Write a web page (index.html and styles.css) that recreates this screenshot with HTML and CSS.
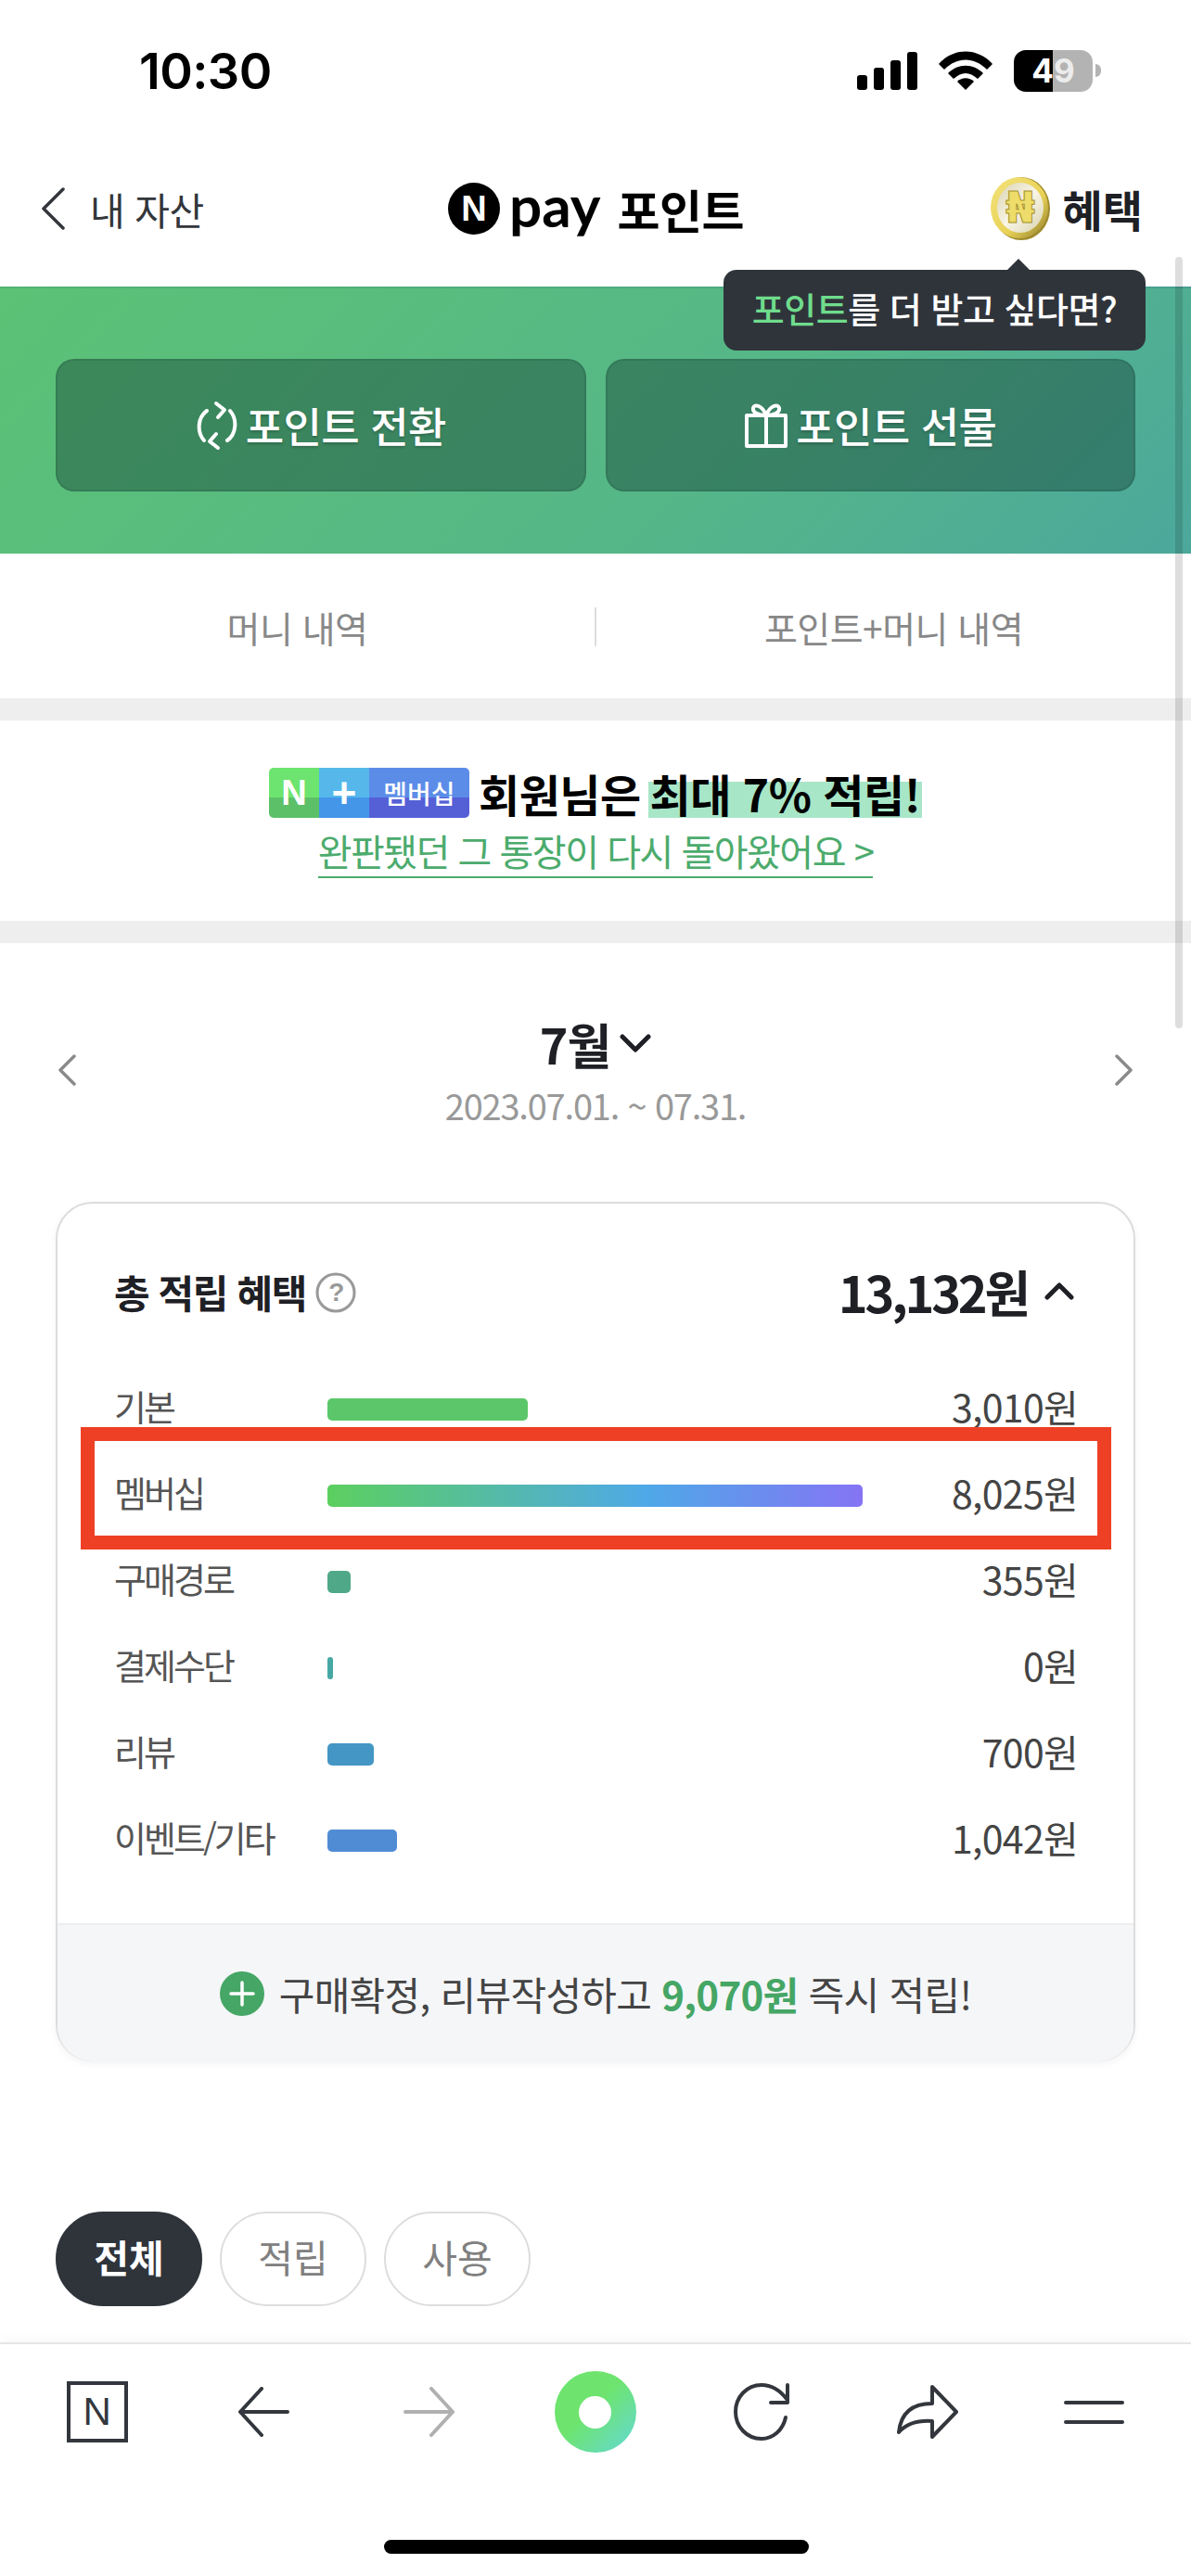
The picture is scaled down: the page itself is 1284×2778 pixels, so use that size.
FILE: index.html
```html
<!DOCTYPE html>
<html lang="ko">
<head>
  <meta charset="UTF-8"/>
  <meta name="viewport" content="width=device-width, initial-scale=1.0"/>
  <title>N pay 포인트</title>
  <link rel="stylesheet" href="styles.css">
</head>
<body>
<div class="page">

  <!-- Status Bar -->
  <div class="status-bar">
    <div class="clock">10:30</div>
    <div class="status-icons">
      <svg class="signal" width="65" height="41" viewBox="0 0 65 41"><rect x="0" y="25" width="11" height="16" rx="3"/><rect x="18" y="17" width="11" height="24" rx="3"/><rect x="36" y="9" width="11" height="32" rx="3"/><rect x="54" y="0" width="11" height="41" rx="3"/></svg>
      <svg class="wifi" width="58" height="42" viewBox="0 0 58 42"><path d="M0 14 C16 -4 42 -4 58 14 L52 20 C38 6 20 6 6 20 Z"/><path d="M10 24 C21 13 37 13 48 24 L42 30 C33 22 25 22 16 30 Z"/><path d="M20 33 C25 28 33 28 38 33 L29 42 Z"/></svg>
      <div class="battery"><div class="battery-body">4<span class="battery-nine">9</span></div><div class="battery-cap"></div></div>
    </div>
  </div>

  <!-- Top Nav -->
  <div class="top-nav">
    <div class="nav-back">
      <svg width="26" height="46" viewBox="0 0 26 46"><path class="line-dark" d="M24 2 L3 23 L24 44"/></svg>
      <span>내 자산</span>
    </div>
    <div class="nav-title">
      <span class="n-logo">N</span>
      <span class="pay-word">pay</span>
      <span class="title-word">포인트</span>
    </div>
    <div class="nav-benefit">
      <svg class="coin" width="64" height="68" viewBox="0 0 64 68">
        <defs>
          <linearGradient id="coinRim" x1="0" y1="0" x2="1" y2="1"><stop offset="0" stop-color="#f3e27c"/><stop offset="0.6" stop-color="#e9d257"/><stop offset="1" stop-color="#8f7d2a"/></linearGradient>
          <linearGradient id="coinFace" x1="0" y1="0" x2="1" y2="1"><stop offset="0" stop-color="#d8d2b0"/><stop offset="0.5" stop-color="#f8f5e6"/><stop offset="1" stop-color="#d9d3ae"/></linearGradient>
        </defs>
        <ellipse cx="33" cy="34" rx="31" ry="34" fill="#a08b2e"/>
        <ellipse cx="31" cy="33" rx="31" ry="33" fill="url(#coinRim)"/>
        <ellipse cx="32" cy="33" rx="25" ry="27" fill="url(#coinFace)"/>
        <text class="coin-mark" x="32" y="49">₦</text>
      </svg>
      <span>혜택</span>
    </div>
  </div>

  <div class="content">

    <!-- Point Buttons -->
    <div class="hero">
      <div class="hero-btn">
        <svg width="46" height="54" viewBox="0 0 46 54"><path class="line-white" d="M12 11 C2 18 1 34 9 43 M34 43 C44 36 45 20 37 11"/><path class="line-white" d="M22 3 L31 10 L24 18 M24 51 L15 44 L22 36"/></svg>
        <span>포인트 전환</span>
      </div>
      <div class="hero-btn">
        <svg width="48" height="48" viewBox="0 0 48 48"><path class="line-white" d="M3 13 H45 V46 H3 Z M24 13 V46"/><path class="line-white" d="M24 13 C16 13 9 10 10 5 C11 0 20 2 24 13 C28 2 37 0 38 5 C39 10 32 13 24 13"/></svg>
        <span>포인트 선물</span>
      </div>
    </div>

    <!-- History Tabs -->
    <div class="history-tabs">
      <div class="history-tab">머니 내역</div>
      <div class="history-divider"></div>
      <div class="history-tab">포인트+머니 내역</div>
    </div>

    <!-- Membership Banner -->
    <div class="banner">
      <div class="banner-main">
        <div class="badge">
          <div class="badge-part badge-n">N</div>
          <div class="badge-part badge-plus">+</div>
          <div class="badge-part badge-member">멤버십</div>
        </div>
        <span class="banner-text">회원님은</span>
        <span class="banner-mark">최대 7% 적립!</span>
      </div>
      <div class="banner-link">완판됐던 그 통장이 다시 돌아왔어요 &gt;</div>
    </div>

    <!-- Month Picker -->
    <div class="month-picker">
      <svg width="20" height="34" viewBox="0 0 20 34"><path class="line-gray" d="M18 2 L3 17 L18 32"/></svg>
      <div class="month-center">
        <div class="month-name">7월
          <svg width="34" height="22" viewBox="0 0 34 22"><path class="line-month" d="M3 4 L17 18 L31 4"/></svg>
        </div>
        <div class="month-range">2023.07.01. ~ 07.31.</div>
      </div>
      <svg width="20" height="34" viewBox="0 0 20 34"><path class="line-gray" d="M2 2 L17 17 L2 32"/></svg>
    </div>

    <!-- Summary Card -->
    <div class="card">
      <div class="card-head">
        <div class="card-title">총 적립 혜택
          <svg class="help" width="44" height="44" viewBox="0 0 44 44"><circle class="help-ring" cx="22" cy="22" r="20"/><text class="help-mark" x="22" y="31">?</text></svg>
        </div>
        <div class="card-total">13,132원
          <svg width="32" height="20" viewBox="0 0 32 20"><path class="line-month" d="M3 17 L16 4 L29 17"/></svg>
        </div>
      </div>

      <div class="rows">
        <div class="row"><div class="row-label">기본</div><div class="row-track"><div class="bar bar-base" style="width:216px"></div></div><div class="row-value">3,010원</div></div>
        <div class="row"><div class="row-label">멤버십</div><div class="row-track"><div class="bar bar-member" style="width:577px"></div></div><div class="row-value">8,025원</div></div>
        <div class="row"><div class="row-label">구매경로</div><div class="row-track"><div class="bar bar-route" style="width:25px"></div></div><div class="row-value">355원</div></div>
        <div class="row"><div class="row-label">결제수단</div><div class="row-track"><div class="bar bar-pay" style="width:6px"></div></div><div class="row-value">0원</div></div>
        <div class="row"><div class="row-label">리뷰</div><div class="row-track"><div class="bar bar-review" style="width:50px"></div></div><div class="row-value">700원</div></div>
        <div class="row"><div class="row-label">이벤트/기타</div><div class="row-track"><div class="bar bar-event" style="width:75px"></div></div><div class="row-value">1,042원</div></div>
      </div>

      <div class="card-foot">
        <svg width="48" height="48" viewBox="0 0 48 48"><circle class="plus-dot" cx="24" cy="24" r="24"/><path class="line-plus" d="M24 12 V36 M12 24 H36"/></svg>
        <span>구매확정, 리뷰작성하고 <b>9,070원</b> 즉시 적립!</span>
      </div>

      <div class="highlight-box"></div>
    </div>

    <!-- Type Filter -->
    <div class="filters">
      <div class="filter active">전체</div>
      <div class="filter">적립</div>
      <div class="filter">사용</div>
    </div>

    <!-- Tooltip + Scrollbar -->
    <div class="tooltip"><span class="tooltip-accent">포인트</span>를 더 받고 싶다면?</div>
    <div class="scrollbar"></div>
  </div>

  <!-- Browser Toolbar -->
  <div class="toolbar">
    <div class="tool-row">
      <div class="tool-n">N</div>
      <svg width="56" height="54" viewBox="0 0 56 54"><path class="line-tool" d="M26 2 L3 27 L26 52 M3 27 H54"/></svg>
      <svg width="56" height="54" viewBox="0 0 56 54"><path class="line-tool-off" d="M30 2 L53 27 L30 52 M2 27 H53"/></svg>
      <div class="tool-green"><div class="tool-green-hole"></div></div>
      <svg width="62" height="64" viewBox="0 0 62 64"><path class="line-tool" d="M57 38 C54 52 43 61 31 61 C15 61 3 48 3 32 C3 16 15 3 31 3 C43 3 51 9 58 18 M59 3 V22 H41"/></svg>
      <svg width="66" height="60" viewBox="0 0 66 60"><path class="line-tool" d="M2 52 C4 32 16 21 38 21 V3 L64 30 L38 57 V40 C22 39 10 43 2 52 Z"/></svg>
      <div class="tool-menu"><div></div><div></div></div>
    </div>
    <div class="home-indicator"></div>
  </div>

</div>
</body>
</html>
```

FILE: styles.css
```css
* { box-sizing: border-box; }
body { margin: 0; background: #fff; font-family: "Noto Sans CJK KR", sans-serif; color: #1e2025; }

.page { width: 1284px; height: 2778px; display: flex; flex-direction: column; overflow: hidden; }

.status-bar { height: 140px; flex: none; padding: 12px 97px 0 150px; display: flex; justify-content: space-between; align-items: center; }
.clock { font-family: Inter, sans-serif; font-size: 54px; font-weight: 600; letter-spacing: -0.6px; color: #000; }
.status-icons { display: flex; align-items: center; gap: 23px; }
.signal, .wifi { fill: #000; display: block; }
.battery { display: flex; align-items: center; gap: 3px; }
.battery-body {
  width: 85px;
  height: 45px;
  border-radius: 13px;
  background: linear-gradient(90deg, #000 49%, #b3b3b3 49%);
  color: #fff;
  font-family: Inter, sans-serif;
  font-size: 35px;
  font-weight: 700;
  line-height: 45px;
  text-align: center;
}
.battery-nine { color: #ececec; }
.battery-cap { width: 6px; height: 14px; background: #b3b3b3; border-radius: 0 6px 6px 0; }

.top-nav { height: 169px; flex: none; padding: 0 52px 0 44px; display: flex; justify-content: space-between; align-items: center; position: relative; }
.nav-back { display: flex; align-items: center; gap: 27px; font-size: 41px; letter-spacing: -0.5px; color: #33363b; }
.nav-title { position: absolute; left: 483px; top: 50%; transform: translateY(-50%); display: flex; align-items: center; }
.n-logo {
  width: 56px;
  height: 56px;
  border-radius: 50%;
  background: #000;
  color: #fff;
  font-family: "Liberation Sans", sans-serif;
  font-size: 38px;
  font-weight: 700;
  line-height: 56px;
  text-align: center;
}
.pay-word { margin-left: 10px; font-family: Lato, sans-serif; font-size: 62px; font-weight: 700; line-height: 60px; padding-bottom: 8px; color: #000; }
.title-word { margin-left: 18px; font-size: 50px; font-weight: 700; letter-spacing: -0.5px; color: #000; }
.nav-benefit { display: flex; align-items: center; gap: 14px; font-size: 47px; font-weight: 700; }
.coin-mark { font-family: "DejaVu Sans", sans-serif; font-size: 46px; font-weight: 700; text-anchor: middle; fill: #eedd6a; stroke: #a8922c; stroke-width: 1; }

.content { flex: 1; position: relative; }

.hero {
  height: 288px;
  padding: 76px 60px 0;
  display: flex;
  gap: 21px;
  background: linear-gradient(135deg, #5cc275, #55b688 60%, #4ca89c);
  border-top: 2px solid rgba(0,0,0,0.06);
}
.hero-btn {
  flex: 1;
  height: 143px;
  border-radius: 20px;
  border: 2px solid rgba(20,60,50,0.16);
  background: rgba(20,60,50,0.42);
  color: #fff;
  font-size: 45px;
  font-weight: 500;
  letter-spacing: -0.6px;
  text-shadow: 0 2px 3px rgba(0,0,0,0.2);
  display: flex;
  justify-content: center;
  align-items: center;
  gap: 8px;
}

.line-white { fill: none; stroke: #fff; stroke-width: 4; stroke-linecap: round; stroke-linejoin: round; }
.line-dark { fill: none; stroke: #33363b; stroke-width: 3.5; stroke-linecap: round; stroke-linejoin: round; }
.line-gray { fill: none; stroke: #8a8a8a; stroke-width: 3.5; stroke-linecap: round; stroke-linejoin: round; }
.line-month { fill: none; stroke: #1e2025; stroke-width: 5; stroke-linecap: round; stroke-linejoin: round; }
.line-tool { fill: none; stroke: #33373d; stroke-width: 4; stroke-linecap: round; stroke-linejoin: round; }
.line-tool-off { fill: none; stroke: #b0b0b0; stroke-width: 4; stroke-linecap: round; stroke-linejoin: round; }
.line-plus { fill: none; stroke: #fff; stroke-width: 3.5; stroke-linecap: round; }

.history-tabs { height: 156px; padding-top: 2px; display: flex; align-items: center; }
.history-tab { flex: 1; text-align: center; font-size: 39px; color: #888; letter-spacing: -0.5px; }
.history-divider { width: 2px; height: 42px; background: #ddd; }

.banner { height: 264px; border-top: 24px solid #eee; border-bottom: 24px solid #eee; display: flex; flex-direction: column; align-items: center; padding-top: 51px; }
.banner-main { display: flex; align-items: flex-end; height: 54px; font-size: 48px; font-weight: 700; color: #000; letter-spacing: -0.5px; }
.badge { display: flex; height: 54px; border-radius: 5px; overflow: hidden; margin-right: 10px; }
.badge-part { color: #fff; display: flex; justify-content: center; align-items: center; font-weight: 700; letter-spacing: 0; line-height: 54px; }
.badge-n { width: 54px; font-family: "Liberation Sans", sans-serif; font-size: 38px; background: linear-gradient(#6de46f 60%, #5cc068 60%); }
.badge-plus { width: 54px; font-family: "Liberation Sans", sans-serif; font-size: 46px; background: linear-gradient(#56b8ea 60%, #4496e8 60%); }
.badge-member { width: 108px; font-size: 28px; font-weight: 500; background: linear-gradient(#5b8ce8 60%, #5560d6 60%); }
.banner-text, .banner-mark { line-height: 54px; }
.banner-mark { margin-left: 8px; padding: 0 2px; background: linear-gradient(transparent 28%, #a8e6c8 28%); }
.banner-link {
  margin-top: 10px;
  font-size: 40px;
  line-height: 50px;
  letter-spacing: -1.5px;
  color: #4cab6d;
  border-bottom: 2px solid #4cab6d;
  padding-bottom: 3px;
}

.month-picker { height: 279px; padding: 73px 62px 79px; display: flex; justify-content: space-between; align-items: center; }
.month-center { text-align: center; }
.month-name { height: 70px; display: flex; justify-content: center; align-items: center; gap: 10px; font-size: 52px; font-weight: 700; letter-spacing: -1px; }
.month-range { margin-top: 7px; font-size: 38px; line-height: 50px; letter-spacing: -1.2px; color: #999; }

.card { margin: 0 60px; height: 927px; position: relative; border: 2px solid #ddd; border-radius: 40px; box-shadow: 0 3px 8px rgba(0,0,0,0.05); background: #fff; }
.card-head { height: 174px; padding: 14px 64px 0 61px; display: flex; justify-content: space-between; align-items: center; }
.card-title { display: flex; align-items: center; gap: 10px; font-size: 42px; font-weight: 700; letter-spacing: -1.4px; }
.help { margin-top: 4px; }
.help-ring { fill: none; stroke: #999; stroke-width: 3; }
.help-mark { font-family: "Liberation Sans", sans-serif; font-size: 28px; fill: #999; text-anchor: middle; }
.card-total { display: flex; align-items: center; gap: 18px; font-size: 54px; font-weight: 700; letter-spacing: -3.2px; }

.rows { padding-bottom: 44px; }
.row { height: 93px; padding: 0 60px 0 61px; display: flex; align-items: center; font-size: 38px; color: #555; letter-spacing: -3px; }
.row-label { width: 230px; flex: none; padding-bottom: 6px; }
.row-track { flex: 1; padding-top: 2px; }
.row-value { font-size: 41px; color: #444; letter-spacing: -0.7px; padding-bottom: 6px; }
.bar { height: 24px; border-radius: 5px; }
.bar-base { background: #5cc76a; }
.bar-member { background: linear-gradient(90deg, #5ccf5f, #4fa8e8 60%, #8574f4); }
.bar-route { background: #4fa988; }
.bar-pay { background: #46a8a4; }
.bar-review { background: #4497c4; }
.bar-event { background: #508cd4; }

.card-foot {
  height: 149px;
  border-top: 2px solid #ebedef;
  border-radius: 0 0 38px 38px;
  background: #f5f6f8;
  display: flex;
  justify-content: center;
  align-items: center;
  gap: 16px;
  font-size: 42px;
  letter-spacing: -0.7px;
  color: #444;
}
.card-foot b { color: #45a665; font-weight: 700; }
.plus-dot { fill: #45a665; }

/* red annotation drawn over the membership row */
.highlight-box { position: absolute; left: 25px; top: 241px; width: 1111px; height: 132px; border: 15px solid #ee4025; }

.filters { margin-top: 162px; padding-left: 60px; display: flex; gap: 19px; }
.filter {
  width: 158px;
  height: 102px;
  border-radius: 51px;
  border: 2px solid #ddd;
  color: #808080;
  font-size: 41px;
  line-height: 92px;
  text-align: center;
}
.filter.active { background: #2f343b; border-color: #2f343b; color: #fff; font-weight: 700; }

.tooltip {
  position: absolute;
  left: 780px;
  top: -18px;
  width: 455px;
  height: 87px;
  border-radius: 14px;
  background: #2f343b;
  color: #fff;
  font-size: 38px;
  font-weight: 500;
  line-height: 82px;
  text-align: center;
  letter-spacing: -0.5px;
}
.tooltip::before {
  content: "";
  position: absolute;
  left: 305px;
  top: -12px;
  border-left: 13px solid transparent;
  border-right: 13px solid transparent;
  border-bottom: 13px solid #2f343b;
}
.tooltip-accent { color: #6fdc8c; }
.scrollbar { position: absolute; right: 9px; top: -32px; width: 8px; height: 832px; border-radius: 4px; background: rgba(0,0,0,0.13); }

.toolbar { height: 252px; flex: none; border-top: 2px solid #e6e6e6; box-shadow: 0 -6px 10px rgba(0,0,0,0.02); background: #fff; position: relative; }
.tool-row { height: 146px; padding: 0 15px; display: grid; grid-template-columns: repeat(7, 1fr); justify-items: center; align-items: center; }
.tool-n {
  width: 66px;
  height: 66px;
  border: 4px solid #33373d;
  color: #33373d;
  font-family: "Liberation Sans", sans-serif;
  font-size: 42px;
  line-height: 58px;
  text-align: center;
}
.tool-green { width: 88px; height: 88px; border-radius: 50%; background: linear-gradient(135deg, #6ee46e 45%, #62d8d8); display: flex; justify-content: center; align-items: center; }
.tool-green-hole { width: 35px; height: 35px; border-radius: 50%; background: #fff; }
.tool-menu { width: 65px; display: flex; flex-direction: column; gap: 17px; }
.tool-menu div { height: 4px; border-radius: 2px; background: #33373d; }
.home-indicator { position: absolute; left: 414px; top: 211px; width: 458px; height: 15px; border-radius: 8px; background: #000; }
```
